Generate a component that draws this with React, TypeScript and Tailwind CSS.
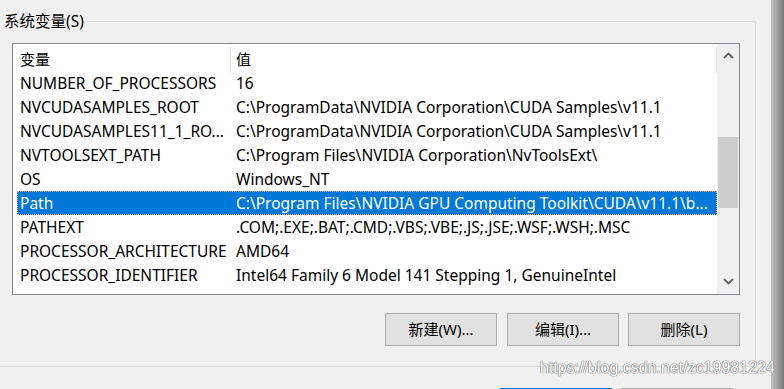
import React from 'react';

type EnvVar = { name: string; value: string };

const vars: EnvVar[] = [
  { name: 'NUMBER_OF_PROCESSORS', value: '16' },
  { name: 'NVCUDASAMPLES_ROOT', value: 'C:\\ProgramData\\NVIDIA Corporation\\CUDA Samples\\v11.1' },
  { name: 'NVCUDASAMPLES11_1_RO...', value: 'C:\\ProgramData\\NVIDIA Corporation\\CUDA Samples\\v11.1' },
  { name: 'NVTOOLSEXT_PATH', value: 'C:\\Program Files\\NVIDIA Corporation\\NvToolsExt\\' },
  { name: 'OS', value: 'Windows_NT' },
  { name: 'Path', value: 'C:\\Program Files\\NVIDIA GPU Computing Toolkit\\CUDA\\v11.1\\b...' },
  { name: 'PATHEXT', value: '.COM;.EXE;.BAT;.CMD;.VBS;.VBE;.JS;.JSE;.WSF;.WSH;.MSC' },
  { name: 'PROCESSOR_ARCHITECTURE', value: 'AMD64' },
  { name: 'PROCESSOR_IDENTIFIER', value: 'Intel64 Family 6 Model 141 Stepping 1, GenuineIntel' },
];

const Chevron = ({ up }: { up?: boolean }) => (
  <svg width="11" height="7" viewBox="0 0 11 7" fill="none" stroke="#606060" strokeWidth="1.8">
    {up ? <path d="M1 6 L5.5 1.5 L10 6" /> : <path d="M1 1 L5.5 5.5 L10 1" />}
  </svg>
);

const WinButton = ({ label }: { label: string }) => (
  <button className="w-[112px] h-[33px] bg-[#e1e1e1] border border-[#adadad] text-[15px] text-black flex items-center justify-center">
    {label}
  </button>
);

export default function App() {
  const selected = 'Path';
  return (
    <div className="relative w-[784px] h-[389px] bg-[#f0f0f0] flex overflow-hidden font-['Noto_Sans','Noto_Sans_CJK_SC',sans-serif] text-black">
      <div className="w-[771px] flex flex-col pt-[21px]">
        {/* 系统变量 group box */}
        <div className="relative w-[756px] border-t border-r border-b border-[#dcdcdc] pt-[21px] pb-[20px]">
          <span className="absolute left-0 top-[-12px] pl-[4px] pr-[3px] bg-[#f0f0f0] text-[15.5px] leading-[22px]">
            系统变量(S)
          </span>

          <div className="ml-[12px] w-[728px] h-[252px] border border-[#828790] bg-white flex">
            <div className="w-[704px] flex flex-col">
              <div className="h-[27px] flex items-center text-[15px] pt-[3px]">
                <div className="w-[217px] pl-[7px]">变量</div>
                <div className="w-px h-[26px] bg-[#e5e5e5] self-start" />
                <div className="flex-1 pl-[5px]">值</div>
                <div className="w-px h-[26px] bg-[#e5e5e5] self-start" />
              </div>
              <div className="pl-[4px] flex flex-col">
                {vars.map((v) => {
                  const isSel = v.name === selected;
                  return (
                    <div
                      key={v.name}
                      className={
                        isSel
                          ? 'h-[24px] w-[700px] pt-[2px] flex items-center text-[15.5px] whitespace-nowrap bg-[#0078d7] text-white border border-dotted border-[#e8a060]'
                          : 'h-[24px] w-[700px] pt-[2px] flex items-center text-[15.5px] whitespace-nowrap border border-transparent'
                      }
                    >
                      <div className="w-[218px] pl-[2px] overflow-hidden">{v.name}</div>
                      <div className="flex-1 overflow-hidden">{v.value}</div>
                    </div>
                  );
                })}
              </div>
            </div>

            {/* scrollbar */}
            <div className="w-[22px] bg-[#f0f0f0] flex flex-col">
              <div className="h-[21px] flex items-center justify-center pt-[2px]">
                <Chevron up />
              </div>
              <div className="flex-1 flex flex-col">
                <div className="mt-[72px] ml-px w-[20px] h-[71px] bg-[#cdcdcd]" />
              </div>
              <div className="h-[21px] flex items-center justify-center pb-[4px]">
                <Chevron />
              </div>
            </div>
          </div>

          <div className="mt-[18px] ml-[385px] flex gap-[10px]">
            <WinButton label="新建(W)..." />
            <WinButton label="编辑(I)..." />
            <div className="-ml-px">
              <WinButton label="删除(L)" />
            </div>
          </div>
        </div>

        {/* OK / Cancel, only their top edge is visible */}
        <div className="mt-[21px] ml-[500px] flex gap-[9px]">
          <div className="w-[112px] h-[33px] border border-[#0078d7] bg-[#e1e1e1]" />
          <div className="w-[112px] h-[33px] border border-[#adadad] bg-[#e1e1e1]" />
        </div>
      </div>

      {/* window edge shadow */}
      <div className="flex-1 bg-gradient-to-r from-[#c4c4c4] to-[#7c7c7c]" />

      {/* watermark */}
      <span className="absolute left-[540px] top-[358px] text-[16px] leading-[20px] font-['Liberation_Sans',sans-serif] text-white [text-shadow:0_0_1px_#6f6f6f,0_0_1px_#6f6f6f,0_0_1px_#6f6f6f]">
        https://blog.csdn.net/zc19981224
      </span>
    </div>
  );
}
